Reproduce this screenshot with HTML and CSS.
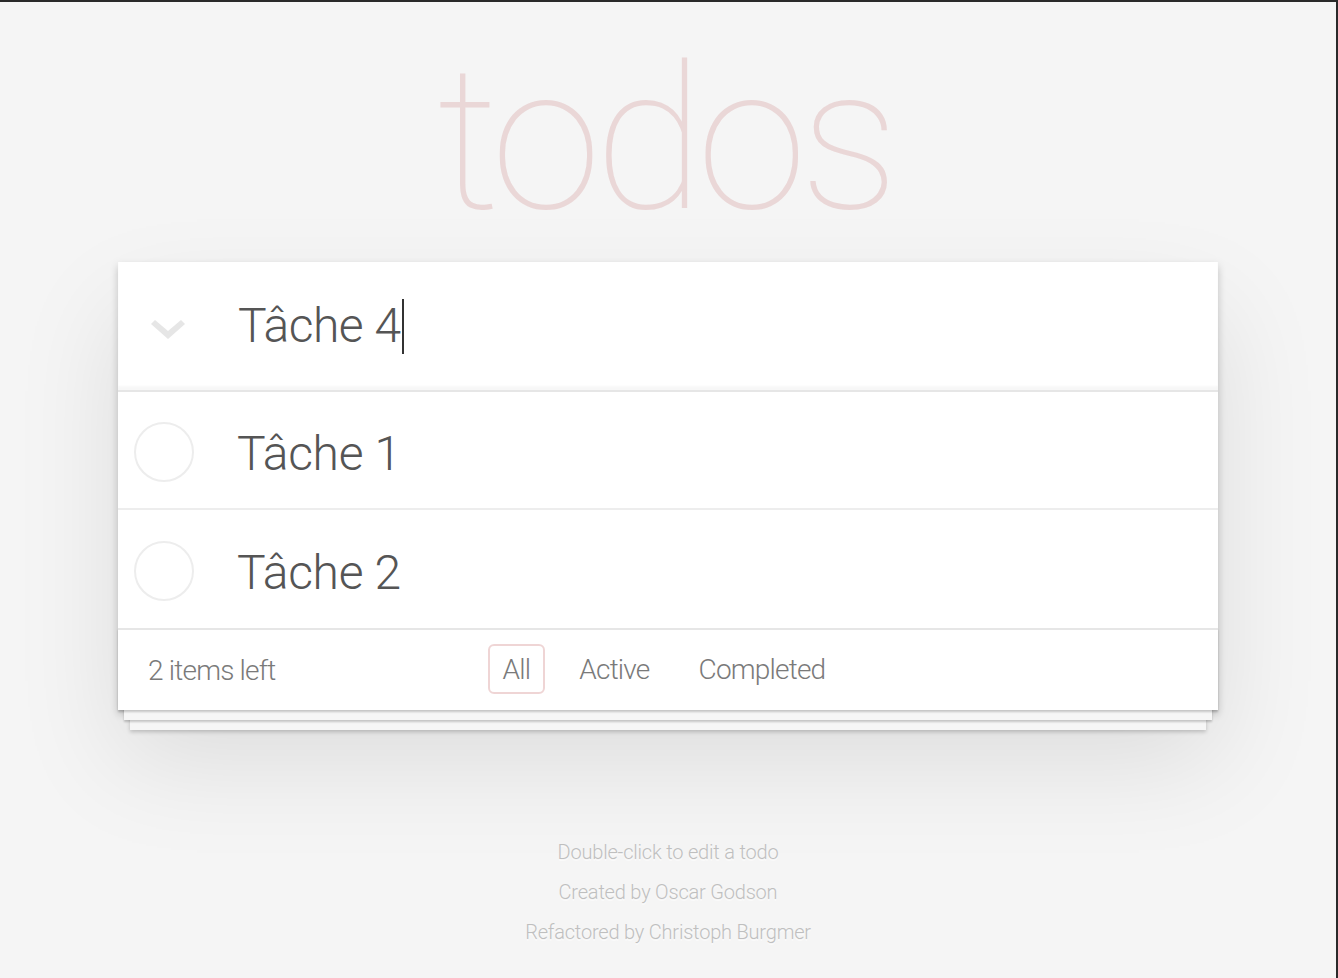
FILE: index.html
```html
<!DOCTYPE html>
<html lang="fr">
<head>
<meta charset="utf-8">
<title>todos</title>
<link rel="stylesheet" href="styles.css">
</head>
<body>
<div class="frame">
  <h1 class="title">todos</h1>
  <section class="todoapp">
    <header class="header">
      <div class="toggle-all">
        <svg class="chevron" width="34" height="19" viewBox="0 0 34 19"><polygon points="0,4 4,0 17,11 30,0 34,4 17,19" fill="#e6e6e6"/></svg>
      </div>
      <div class="new-todo">Tâche 4<span class="caret"></span></div>
    </header>
    <ul class="todo-list">
      <li class="todo"><span class="toggle"></span><label class="todo-label">Tâche 1</label></li>
      <li class="todo"><span class="toggle"></span><label class="todo-label">Tâche 2</label></li>
    </ul>
    <footer class="footer">
      <span class="todo-count"><strong class="count-num">2</strong> items left</span>
      <ul class="filters">
        <li><a class="filter selected" href="#/">All</a></li>
        <li><a class="filter" href="#/active">Active</a></li>
        <li><a class="filter" href="#/completed">Completed</a></li>
      </ul>
      <span class="spacer"></span>
    </footer>
  </section>
  <footer class="info">
    <p class="info-line">Double-click to edit a todo</p>
    <p class="info-line">Created by Oscar Godson</p>
    <p class="info-line">Refactored by Christoph Burgmer</p>
  </footer>
</div>
</body>
</html>
```

FILE: styles.css
```css
html, body {
  margin: 0;
  padding: 0;
}

body {
  background: #f5f5f5;
  font-family: Roboto, "Liberation Sans", sans-serif;
  font-weight: 300;
  color: #4d4d4d;
  font-size: 28px;
  line-height: 1.4;
}

.frame {
  box-sizing: border-box;
  min-height: 978px;
  border-top: 2px solid #2a2a2a;
  border-right: 2px solid #2a2a2a;
  overflow: hidden;
}

.title {
  box-sizing: border-box;
  height: 260px;
  margin: 0;
  padding-top: 38px;
  padding-right: 7px;
  font-size: 200px;
  line-height: 200px;
  font-weight: 100;
  letter-spacing: -7px;
  text-align: center;
  color: rgba(175, 47, 47, 0.15);
}

.todoapp {
  width: 1100px;
  margin: 0 auto;
  background: #fff;
  box-shadow: 0 4px 8px 0 rgba(0, 0, 0, 0.2), 0 50px 100px 0 rgba(0, 0, 0, 0.1);
}

.header {
  display: flex;
  align-items: center;
  height: 128px;
  box-shadow: inset 0 -4px 2px rgba(0, 0, 0, 0.03);
}

.toggle-all {
  box-sizing: border-box;
  flex: none;
  width: 120px;
  padding-left: 33px;
  padding-top: 7px;
  display: flex;
}

.chevron {
  display: block;
}

.new-todo {
  display: flex;
  align-items: center;
  font-size: 48px;
  line-height: 67px;
  letter-spacing: -0.5px;
  color: #555;
  padding-bottom: 2px;
}

.caret {
  display: block;
  width: 2px;
  height: 55px;
  margin-left: 1px;
  margin-top: 2px;
  background: #333;
}

.todo-list {
  list-style: none;
  margin: 0;
  padding: 0;
  border-top: 2px solid #e6e6e6;
}

.todo {
  display: flex;
  align-items: center;
  height: 116px;
  border-bottom: 2px solid #ededed;
}

.todo:last-child {
  height: 118px;
  border-bottom: none;
}

.toggle {
  box-sizing: border-box;
  flex: none;
  width: 60px;
  height: 60px;
  margin-left: 16px;
  margin-top: 4px;
  border: 2px solid #ededed;
  border-radius: 50%;
}

.todo-label {
  margin-left: 43px;
  padding-top: 7px;
  font-size: 48px;
  line-height: 1.2;
  letter-spacing: -0.3px;
  color: #555;
}

.footer {
  box-sizing: border-box;
  height: 82px;
  padding: 0 30px 2px;
  border-top: 2px solid #e6e6e6;
  display: grid;
  grid-template-columns: 1fr auto 1fr;
  align-items: center;
  color: #7a7a7a;
  letter-spacing: -0.8px;
  background: #fff;
  box-shadow: 0 2px 2px rgba(0, 0, 0, 0.2),
    0 16px 0 -6px #f6f6f6,
    0 18px 2px -6px rgba(0, 0, 0, 0.2),
    0 32px 0 -12px #f6f6f6,
    0 34px 4px -12px rgba(0, 0, 0, 0.2);
}

.todo-count {
  padding-top: 4px;
}

.count-num {
  font-weight: 300;
}

.filters {
  display: flex;
  gap: 19px;
  list-style: none;
  margin: 0 0 0 -8px;
  padding: 0;
}

.filter {
  display: block;
  padding: 7px 13px 6px;
  border: 2px solid transparent;
  border-radius: 6px;
  line-height: 33px;
  color: inherit;
  text-decoration: none;
}

.filter.selected {
  border-color: rgba(175, 47, 47, 0.2);
}

.info {
  margin: 132px auto 0;
  color: #bfbfbf;
  font-size: 20px;
  line-height: 1;
  letter-spacing: -0.2px;
  text-align: center;
  text-shadow: 0 2px 0 rgba(255, 255, 255, 0.5);
}

.info-line {
  margin: 20px 0;
}
```
